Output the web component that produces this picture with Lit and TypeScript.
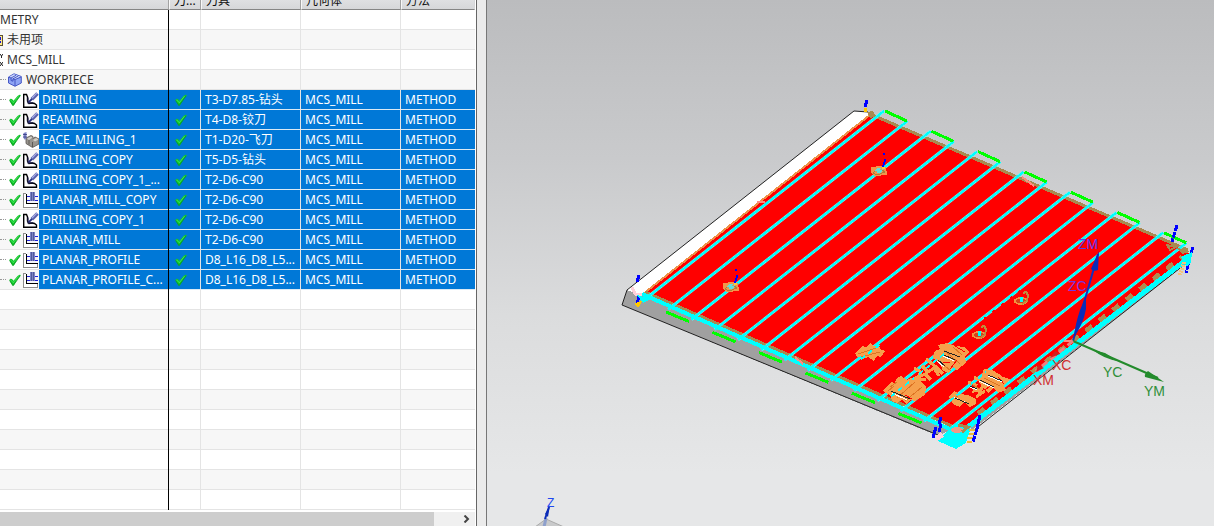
import { LitElement, html, svg, css, nothing } from "lit";
import { customElement } from "lit/decorators.js";

type Kind = "drill" | "face" | "planar";

interface Operation {
  name: string;
  kind: Kind;
  tool: string;
}

const operations: Operation[] = [
  { name: "DRILLING", kind: "drill", tool: "T3-D7.85-钻头" },
  { name: "REAMING", kind: "drill", tool: "T4-D8-铰刀" },
  { name: "FACE_MILLING_1", kind: "face", tool: "T1-D20-飞刀" },
  { name: "DRILLING_COPY", kind: "drill", tool: "T5-D5-钻头" },
  { name: "DRILLING_COPY_1_...", kind: "drill", tool: "T2-D6-C90" },
  { name: "PLANAR_MILL_COPY", kind: "planar", tool: "T2-D6-C90" },
  { name: "DRILLING_COPY_1", kind: "drill", tool: "T2-D6-C90" },
  { name: "PLANAR_MILL", kind: "planar", tool: "T2-D6-C90" },
  { name: "PLANAR_PROFILE", kind: "planar", tool: "D8_L16_D8_L5..." },
  { name: "PLANAR_PROFILE_C...", kind: "planar", tool: "D8_L16_D8_L5..." },
];

const range = (n: number) => Array.from({ length: n }, (_, i) => i);

const checkIcon = html`<svg class="check" width="12" height="12" viewBox="0 0 12 12" aria-hidden="true">
  <path d="M0.300 6 1.500 4.800 3 5 4.500 6.800 8.500 2 10.500 0.800 12 1 8 6 5.500 10.500 4 12 2.500 10Z" fill="#10c62a" />
  <path d="M0.600 6.500 4 11.600 7.500 7 11 2" fill="none" stroke="#0a9a22" stroke-width="0.800" />
  <path d="M1.500 5.800 4.300 8.800 9.500 2" fill="none" stroke="#4be860" stroke-width="0.800" />
</svg>`;

const drillIcon = html`<svg width="16" height="16" viewBox="0 0 16 16" aria-hidden="true">
  <path d="M0.700 2.500H3.500L4.500 5V9L6 11.500 9 11 11.500 11.500 13.500 13V15.300H0.700Z" fill="#fff" stroke="#000" stroke-width="1.400" />
  <path d="M5 5.500V10.800H10.300" fill="none" stroke="#20204a" stroke-width="1.200" />
  <path d="M5.500 10.300 9.500 6.500" stroke="#28307c" stroke-width="1.800" />
  <path d="M8.800 7.200 14.500 1.500" stroke="#5a62ac" stroke-width="3.600" />
  <path d="M9 6 13.800 1.200" stroke="#a8aee6" stroke-width="1.200" />
</svg>`;

const faceIcon = html`<svg width="16" height="16" viewBox="0 0 16 16" aria-hidden="true">
  <path d="M3 6 8 3.500 10 4.500V6.500L12 5 16 7V12L9.500 15.500 3 11.500Z" fill="#98948e" stroke="#55524e" stroke-width="0.800" />
  <path d="M4 6.500 8 4.500 9.500 5.500 6 8ZM10 8 13 6 15.500 7.500 12 9.500Z" fill="#d2cfc8" />
  <path d="M9.500 10V15M6 8V12.500" stroke="#5d5a55" />
  <path d="M0.500 1 3.500 0V6L2 8 0.500 6Z" fill="#7a80c4" />
  <path d="M0 2.500H4M0 5H4" stroke="#333a80" stroke-width="0.800" />
</svg>`;

const planarIcon = html`<svg width="16" height="16" viewBox="0 0 16 16" aria-hidden="true" shape-rendering="crispEdges">
  <path d="M0 1H3V11H15V15H0Z" fill="#fff" />
  <path d="M4 0H15V11H4Z" fill="#f4f4fa" />
  <path d="M0.500 15V1.500H3M0 15.500H15M14.500 12V15" fill="none" stroke="#8c8c8c" />
  <path d="M3.500 2V11.500H15" fill="none" stroke="#000" />
  <path d="M4 4.500H15M4 8.500H15" stroke="#2020d8" />
  <path d="M7 0H12V9H7Z" fill="#7c84c4" />
  <path d="M8.500 0V9M10.500 0V9" stroke="#50589c" />
</svg>`;

const workpieceIcon = html`<svg class="cube" width="14" height="14" viewBox="0 0 14 14" aria-hidden="true">
  <path d="M0.500 4 6 0.800 13.300 3.500V10L7 13.300 0.500 10Z" fill="#8ea4f4" stroke="#3a4cc0" stroke-width="0.900" />
  <path d="M1 4 6 1.300 12.800 3.700 7.300 6.500Z" fill="#cfd9fc" />
  <path d="M7 6.500V13M1 4.200 3 5V7.500L5 8.200V5.800L7 6.500 13 4M3 5 8 2.300M5 5.800 10.200 3" fill="none" stroke="#3a4cc0" stroke-width="0.900" />
</svg>`;

const unusedIcon = html`<svg width="3" height="12" viewBox="0 0 3 12" aria-hidden="true" shape-rendering="crispEdges">
  <path d="M0 1H2.500V11H0" fill="#ffe98a" stroke="#5a5030" />
  <path d="M0 3H1V6H0ZM0 7H1V9H0Z" fill="#1414e0" />
</svg>`;

const mcsIcon = html`<svg width="3" height="14" viewBox="0 0 3 14" aria-hidden="true">
  <path d="M0 1 1.500 3 3 1M1.500 3V5M0 9 3 13M3 9 0 13" fill="none" stroke="#222" />
</svg>`;

const kindIcon = { drill: drillIcon, face: faceIcon, planar: planarIcon };

@customElement("operation-navigator")
class OperationNavigator extends LitElement {
  static styles = css`
    :host {
      display: flex;
      flex-direction: column;
      flex: none;
      width: 476px;
      overflow: hidden;
      background: #fff;
      border-right: 1px solid #666;
      color: #333;
      font: 12px/16px "Noto Sans", "Noto Sans CJK SC", sans-serif;
    }
    .grid {
      width: 475px;
      table-layout: fixed;
      border-collapse: separate;
      border-spacing: 0;
    }
    .c-name { width: 169px; }
    .c-path { width: 32px; }
    .c-tool { width: 100px; }
    .c-geom { width: 100px; }
    th {
      padding: 0;
      font-weight: 400;
      color: #111;
      text-align: left;
      border-bottom: 1px solid #858585;
      border-right: 1px solid #a2a2a2;
      background: linear-gradient(#dfe0e2, #d6d7d9);
    }
    th + th { border-left: 1px solid #f8f8f8; }
    th:last-child { border-right-color: #d6d7d9; }
    .head {
      display: flex;
      align-items: flex-end;
      height: 9px;
      padding: 0 4px;
      overflow: hidden;
      white-space: nowrap;
    }
    td {
      height: 19px;
      padding: 0;
      border-bottom: 1px solid #e4e4e4;
      border-right: 1px solid #e4e4e4;
      white-space: nowrap;
      overflow: hidden;
    }
    td:last-child { border-right: 0; }
    td:first-child {
      height: 20px;
      vertical-align: top;
      border-bottom: 0;
      border-right-color: #000;
      box-shadow: inset 0 -1px #e4e4e4;
    }
    tbody tr:nth-child(even) { background: #f7f7f7; }
    .value { display: block; padding: 0 4px; }
    .picked td + td,
    .picked .name { background: #0078d7; color: #fff; }
    .picked td { border-bottom-color: #dceaf5; }
    .tree { display: flex; align-items: center; height: 19px; }
    .name { flex: 1; height: 19px; line-height: 19px; padding: 0 3px; }
    .plain { padding: 0 4px; }
    .root { padding: 0; }
    .stub { width: 6px; margin-right: 3px; border-top: 1px dotted #999; }
    .stub.short { margin-right: 2px; }
    .check { display: block; }
    .tree .check { margin-right: 2px; }
    .state { display: block; padding-left: 6px; }
    .scroll {
      display: flex;
      flex: 1;
      min-height: 14px;
      margin-top: 2px;
      width: 475px;
      background: #f0f0f0;
    }
    .thumb { width: 434px; background: #cdcdcd; }
    .next {
      display: flex;
      flex: 1;
      align-items: center;
      justify-content: flex-end;
      padding: 0 5px 0 0;
      border: 0;
      background: none;
    }
  `;

  private plainRow(label: string, icon: unknown, cls = "plain") {
    return html`<tr>
      <td><div class="tree">${icon}<span class=${"name " + cls}>${label}</span></div></td>
      <td></td><td></td><td></td><td></td>
    </tr>`;
  }

  private operationRow(op: Operation) {
    return html`<tr class="picked">
      <td><div class="tree"><span class="stub"></span>${checkIcon}${kindIcon[op.kind]}<span class="name">${op.name}</span></div></td>
      <td><span class="state">${checkIcon}</span></td>
      <td><span class="value">${op.tool}</span></td>
      <td><span class="value">MCS_MILL</span></td>
      <td><span class="value">METHOD</span></td>
    </tr>`;
  }

  render() {
    return html`
      <table class="grid">
        <colgroup>
          <col class="c-name" /><col class="c-path" /><col class="c-tool" /><col class="c-geom" /><col />
        </colgroup>
        <thead>
          <tr>
            ${["", "刀...", "刀具", "几何体", "方法"].map(
              (t) => html`<th scope="col"><div class="head"><span>${t}</span></div></th>`
            )}
          </tr>
        </thead>
        <tbody>
          ${this.plainRow("METRY", nothing, "root")}
          ${this.plainRow("未用项", unusedIcon)}
          ${this.plainRow("MCS_MILL", mcsIcon)}
          ${this.plainRow("WORKPIECE", html`<span class="stub short"></span>${workpieceIcon}`)}
          ${operations.map((op) => this.operationRow(op))}
          ${range(11).map(() => html`<tr><td></td><td></td><td></td><td></td><td></td></tr>`)}
        </tbody>
      </table>
      <div class="scroll">
        <div class="thumb"></div>
        <button class="next" aria-label="Scroll right">
          <svg width="7" height="8" viewBox="0 0 7 8" aria-hidden="true">
            <path d="M1.500 0.500 5 4 1.500 7.500" fill="none" stroke="#444" stroke-width="2" />
          </svg>
        </button>
      </div>
    `;
  }
}

@customElement("part-viewport")
class PartViewport extends LitElement {
  static styles = css`
    :host {
      display: block;
      flex: 1;
      min-width: 0;
      overflow: hidden;
      background: linear-gradient(#bbbcbe, #c9cacc 30%, #dbdcdd 60%, #e6e7e8 90%, #e6e7e8);
    }
    .scene { display: block; width: 100%; height: 100%; }
    .label { font: 14px "Liberation Sans", sans-serif; }
    .small { font: 12px "Liberation Sans", sans-serif; }
  `;

  private hole(x: number, y: number) {
    return svg`<g transform="translate(${x} ${y})">
      <path d="M-8-4 1-5 7-4 8 4-4 5-8 2Z" fill="#f2954a" />
      <path d="M-6 2 0-3 6 1-2 4Z" fill="none" stroke="#a8803c" />
      <path d="M-5 0-1-3 4-2 2 2-1 2Z" fill="#5ce0e0" />
      <path d="M-4 0H-2M-1 2H1M1-2H3" stroke="#c9a060" />
      <path d="M4-3V-6M5-6 6-12" stroke="#0000ff" stroke-width="2" />
      <path d="M3-3H6" stroke="#f6d040" stroke-width="2" />
      <path d="M5-18V-16" stroke="#0000ff" stroke-width="2" />
    </g>`;
  }

  private hook(x: number, y: number) {
    return svg`<g transform="translate(${x} ${y})" fill="none">
      <ellipse rx="6" ry="3" fill="#d8401c" stroke="#f0953f" stroke-width="2" />
      <path d="M1 3 6 0 7-6 5-9 2-8" stroke="#c08a3e" stroke-width="2" />
      <path d="M-1-4H2V1H-1Z" fill="#00ffff" />
    </g>`;
  }

  render() {
    const passes = range(14).map((i) => {
      const x = i * 23.25;
      const y = i * 10.15;
      const odd = i > 0 && i < 13 ? 4 : 0;
      return svg`<path d="M${649 + x - odd} ${296 + y + odd * 0.8}L${884 + x} ${111 + y}" />`;
    });
    const topLinks = range(7).map((k) => {
      const x = 885 + k * 46.5;
      const y = 111 + k * 20.3;
      return svg`<path d="M${x} ${y}l22 10" />`;
    });
    const lowLinks = range(6).map((k) => {
      const x = 666 + k * 46.5;
      const y = 312 + k * 20.3;
      return svg`<path d="M${x} ${y}l23 9.500" />`;
    });

    return html`<svg class="scene" viewBox="487 0 727 526" preserveAspectRatio="xMidYMid meet" role="img" aria-label="Tool path">
      <g shape-rendering="crispEdges">
        <path d="M622 305 627 290 643 292 950 430 938 436Z" fill="#a0a0a0" />
        <path d="M627 290 854 111 870 112 871 116 643 296Z" fill="#fff" />
        <path d="M972 430 1186 264V257L968 424Z" fill="#a0a0a0" />
      </g>
      <g fill="none" stroke="#222">
        <path d="M627 290 622 305 938 435" />
        <path d="M627 290 854 111 868 112" />
        <path d="M974 430 1184 265" />
      </g>
      <g shape-rendering="crispEdges">
        <path d="M643 295 870 114 1187 250 1190 256 964 430Z" fill="#f00" />
        <path d="M643 294 870 115" stroke="#ee9048" stroke-width="2" />
        <path d="M870 114 1188 250" stroke="#a88a50" stroke-width="3" />
        <path d="M645 292 952 426" stroke="#a88a50" stroke-width="3" />
        <path d="M978 414 1182 257" stroke="#b08c50" stroke-width="5" stroke-dasharray="8 9" />
      </g>
      <g stroke="#50ffff" stroke-width="3">${passes}</g>
      <g shape-rendering="crispEdges">
        <g stroke="#00ffff" stroke-width="2">${passes}</g>
        <path d="M642 294 952 430" stroke="#00ffff" stroke-width="4" />
        <path d="M964 430 1190 257" stroke="#00ffff" stroke-width="5" />
        <g stroke="#00ff00" stroke-width="3">${topLinks}${lowLinks}</g>
        <path d="M867 112 873 111 876 116 870 118Z" fill="#a88a50" />
        <path d="M757 202H765M1022 177 1034 186M795 357 803 364M1064 341H1073" stroke="#ff8a80" stroke-width="2" />

        ${this.hole(879, 171)}${this.hole(731, 287)}
        ${this.hook(1021, 301)}${this.hook(979, 335)}
        <path d="M984 319 1020 291" stroke="#f00" stroke-width="2" stroke-dasharray="3 8" />

        <g fill="#f6a04c">
          <path d="M855 353 862 346 866 347 870 343 874 346 879 345 880 349 885 351 881 357 877 356 874 361 868 357 863 359 862 356 857 357Z" />
          <path d="M883 391 888 385 892 382 895 384 896 379 901 376 907 380 916 376 926 387 925 395 915 401 910 400 907 404 902 400 897 403 892 401 891 396Z" />
          <path d="M933 357 935 351 940 349 938 345 947 343 955 346 965 347 969 352 965 357 966 363 957 370 953 367 949 373 943 371 941 366Z" />
          <path d="M949 397 954 391 960 394 968 395 976 399 976 404 970 407 964 402 960 407 954 405Z" />
          <path d="M984 369 992 370 999 374 1003 377 1010 379 1004 386 1006 390 998 393 994 388 988 393 983 388 979 382Z" />
        </g>
        <path d="M914 368 921 372 917 378 925 374 931 380M922 366 928 372 934 368 939 376M926 359 936 367 943 374M918 379 926 379M968 382 976 385 974 391 981 389M974 377 984 383 979 394M976 397 985 391" fill="none" stroke="#f6a04c" stroke-width="3" />
        <path d="M888 391 894 386M897 398 915 382M905 401 922 387M890 387 897 382M944 350 960 364M953 347 962 355M945 366 951 371M951 399 958 396M971 384 980 389M984 378 1000 386M858 354 876 348M861 357 880 352" fill="none" stroke="#dd7424" />
        <path d="M955 346 965 352M936 364 950 362M950 369 957 360M998 377 1004 384M985 390 990 386M912 399 905 395" stroke="#f00" />
        <g stroke="#fff">
          <path d="M892 393 907 400M941 355 954 361M937 361 944 367M953 397 969 404M988 376 1002 382M979 381 994 388M970 387 977 390" />
        </g>
        <g stroke="#222">
          <path d="M891 391 910 399M944 351 960 357M942 354 955 360M938 360 945 366M955 398 969 404M988 375 1002 381M980 380 994 387" />
          <path d="M970 386 977 389" />
        </g>
        <path d="M861 359 882 343M884 402 914 378M919 374 944 354M950 401 986 372" stroke="#00ffff" stroke-width="2" stroke-dasharray="5 4" />

        <path d="M938 441 945 433 958 424 970 430 966 443 956 449Z" fill="#00ffff" />
        <path d="M935 437 941 432 944 437 937 441Z" fill="#ffd0da" />
        <ellipse cx="957" cy="430" rx="6" ry="3" fill="#ee9b88" />
        <path d="M958 425 968 427 962 432" fill="none" stroke="#a88a50" stroke-width="3" />
        <path d="M969 430H975M969 434H974M967 438H973M967 442H972" stroke="#f0ba35" stroke-width="2" />
        <g stroke="#0000ff" stroke-width="3">
          <path d="M865 107 867 100M637 282 639 275M637 305 639 295M941 417 939 424M941 424 939 432M936 427 933 438M980 415 977 429" />
          <path d="M977 429 973 442M1177 225 1172 242M1193 247 1190 257M1190 257 1186 273" stroke-dasharray="6 1" />
        </g>
        <path d="M864 108H867V112H864ZM634 304 643 300 638 308Z" fill="#ffc800" />
        <path d="M632 287 635 294 642 295" fill="none" stroke="#ffd0da" stroke-width="3" />
        <path d="M637 295 651 299 643 303Z" fill="#00ffff" />
        <path d="M1176 247 1190 252 1182 254Z" fill="#a88a50" />
        <path d="M1167 245 1176 247 1170 250Z" fill="none" stroke="#a88a50" stroke-width="2" />
        <path d="M1181 257 1192 252 1191 262 1187 267Z" fill="#00ffff" />
        <path d="M1184 262 1180 275" stroke="#f5c47c" stroke-width="4" stroke-dasharray="2 1" />
      </g>

      <g>
        <path d="M1073 341 1098 254" stroke="#1030c0" stroke-width="2" />
        <path d="M1099 251 1091 269Q1094 272 1098 270ZM1086 296 1080 310Q1075 325 1074 337 1083 325 1086 309Z" fill="#0b2cb8" />
        <path d="M1073 341 1158 378" stroke="#238b2c" stroke-width="2" />
        <path d="M1164 382 1148 371Q1144 374 1145 377ZM1118 361 1105 353 1093 350Q1104 359 1118 361Z" fill="#238b2c" />
        <path d="M1073 341 1036 371" stroke="#f08080" stroke-width="3" stroke-dasharray="7 4" />
        <path d="M1036 372 1038 365 1044 368ZM1050 358 1055 351 1060 354Z" fill="#d02020" />
        <g class="label">
          <text x="1078" y="249" fill="#5a3cf0">ZM</text>
          <text x="1068" y="291" fill="#7a35e0">ZC</text>
          <text x="1052" y="370" fill="#d03030">XC</text>
          <text x="1033" y="385" fill="#d03030">XM</text>
          <text x="1103" y="377" fill="#2f8f38">YC</text>
          <text x="1144" y="396" fill="#2f8f38">YM</text>
        </g>
        <path d="M535 527 546 519 564 527Z" fill="#c9cacb" stroke="#aaa" />
        <path d="M544 527 546 518" stroke="#8ea0cc" stroke-width="3" />
        <path d="M545 519 549 507" stroke="#0b2cb8" stroke-width="2" />
        <path d="M550 505 545 514 548 517Z" fill="#0b2cb8" />
        <text class="small" x="547" y="507" fill="#2048f0">Z</text>
      </g>
    </svg>`;
  }
}

@customElement("app-root")
class AppRoot extends LitElement {
  static styles = css`
    :host {
      display: flex;
      height: 100vh;
      overflow: hidden;
    }
    .splitter {
      flex: none;
      width: 9px;
      background: #ebebeb;
      border-right: 1px solid #777;
    }
    operation-navigator { height: 100%; }
  `;

  render() {
    return html`
      <operation-navigator></operation-navigator>
      <div class="splitter"></div>
      <part-viewport></part-viewport>
    `;
  }
}
